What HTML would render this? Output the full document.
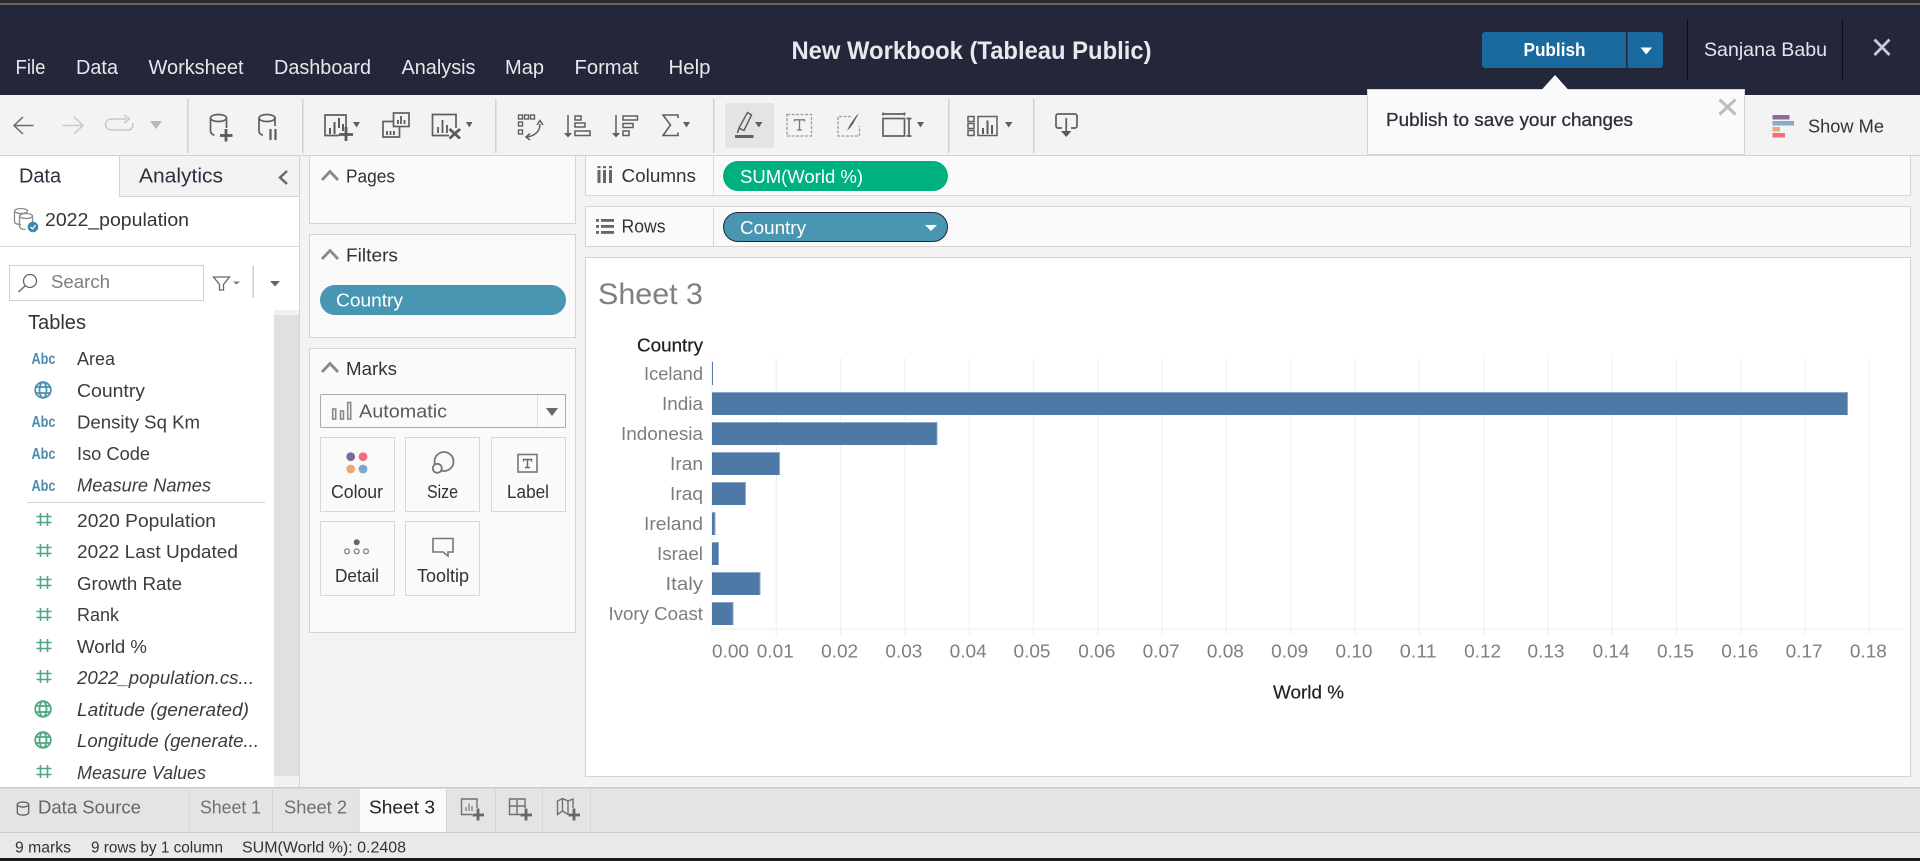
<!DOCTYPE html>
<html lang="en">
<head>
<meta charset="utf-8">
<title>New Workbook (Tableau Public)</title>
<style>
html,body{margin:0;padding:0;width:1920px;height:861px;overflow:hidden;background:#f3f3f3}
svg{display:block}
text{font-family:"Liberation Sans",sans-serif;font-size:18.5px;fill:#3c3c3c}
.m{font-size:20px;fill:#e6e8ec}
.i{stroke:#5f5f5f;stroke-width:1.7;fill:none}
.it{font-style:italic}
.l{fill:#7d7d7d}
.t{fill:#808080}
.s{font-size:15.5px;fill:#333}
.b{fill:#4e79a7}
.h{stroke:#8da7c6;stroke-width:1;fill:none}
.card{fill:#fafafa;stroke:#d4d4d4;stroke-width:1}
.btn{fill:#fafafa;stroke:#d8d8d8;stroke-width:1}
.n{stroke:#4ea883;stroke-width:1.6;fill:none}
.g{stroke:#4c8fb0;stroke-width:1.8;fill:none}
.abc{font-size:15.5px;font-weight:bold;fill:#4f8cab}
</style>
</head>
<body>
<svg xmlns="http://www.w3.org/2000/svg" width="1920" height="861" viewBox="0 0 1920 861">
<!-- base -->
<rect width="1920" height="861" fill="#f3f3f3"/>
<rect width="1920" height="3" fill="#2b2b2b"/>
<rect y="3" width="1920" height="2" fill="#666"/>
<rect y="5" width="1920" height="90" fill="#232739"/>

<!-- menu -->
<text class="m" x="15.5" y="74" textLength="30" lengthAdjust="spacingAndGlyphs">File</text>
<text class="m" x="76" y="74" textLength="42" lengthAdjust="spacingAndGlyphs">Data</text>
<text class="m" x="148.500" y="74" textLength="95" lengthAdjust="spacingAndGlyphs">Worksheet</text>
<text class="m" x="274" y="74" textLength="97" lengthAdjust="spacingAndGlyphs">Dashboard</text>
<text class="m" x="401.500" y="74" textLength="74" lengthAdjust="spacingAndGlyphs">Analysis</text>
<text class="m" x="505" y="74" textLength="39" lengthAdjust="spacingAndGlyphs">Map</text>
<text class="m" x="574.500" y="74" textLength="64" lengthAdjust="spacingAndGlyphs">Format</text>
<text class="m" x="668.500" y="74" textLength="42" lengthAdjust="spacingAndGlyphs">Help</text>
<text x="791.500" y="59" textLength="360" lengthAdjust="spacingAndGlyphs" style="font-size:25px;font-weight:bold;fill:#e8e9ec">New Workbook (Tableau Public)</text>

<!-- publish -->
<rect x="1482" y="32" width="181" height="36" rx="3" fill="#1a6aa0"/>
<rect x="1626" y="32" width="1.5" height="36" fill="#232739"/>
<polygon points="1640.500,47.500 1652,47.500 1646.250,54.500" fill="#fff"/>
<text x="1523.500" y="56" textLength="62" lengthAdjust="spacingAndGlyphs" style="font-size:18.5px;font-weight:bold;fill:#fff">Publish</text>
<rect x="1687" y="20" width="1" height="60" fill="#0b0d14"/>
<rect x="1842" y="20" width="1" height="60" fill="#0b0d14"/>
<text x="1704" y="56" textLength="123" lengthAdjust="spacingAndGlyphs" style="font-size:19.5px;fill:#e4e6ea">Sanjana Babu</text>
<path d="M1874.500 39.500L1889.500 55M1889.500 39.500L1874.500 55" stroke="#c8cbd2" stroke-width="2.800" fill="none"/>

<!-- toolbar -->
<rect y="95" width="1920" height="60" fill="#f3f3f3"/>
<rect y="155" width="1920" height="1" fill="#d4d4d4"/>
<g fill="#d2d2d2">
<rect x="187" y="99" width="1.500" height="54"/><rect x="302" y="99" width="1.500" height="54"/><rect x="495" y="99" width="1.500" height="54"/><rect x="713" y="99" width="1.500" height="54"/><rect x="948" y="99" width="1.500" height="54"/><rect x="1033" y="99" width="1.500" height="54"/>
</g>
<path d="M33.500 125.500H14M23 117L14 125.500L23 134" stroke="#6a6a6a" stroke-width="1.500" fill="none"/>
<path d="M62.500 125.500H83M74 117L83 125.500L74 134" stroke="#c8c8c8" stroke-width="1.500" fill="none"/>
<path d="M127 119H111a5.500 5.500 0 0 0 0 11H128a5 5 0 0 0 5-5V123M124 115L129.500 119L124 123" stroke="#c8c8c8" stroke-width="1.500" fill="none"/>
<polygon points="150,121 162,121 156,129" fill="#b8b8b8"/>

<!-- connect data -->
<g class="i"><ellipse cx="218.500" cy="118" rx="8" ry="3.500"/><path d="M210.500 118V131a4 4 0 0 0 4 4M226.500 118V128"/></g>
<path d="M226 129V141.500M220 135.500H232.500" stroke="#5a5a5a" stroke-width="2.800" fill="none"/>
<g class="i"><ellipse cx="267" cy="118" rx="8" ry="3.500"/><path d="M259 118V131a4 4 0 0 0 4 4M275 118V126"/></g>
<path d="M270.500 129V140M275.500 129V140" stroke="#5a5a5a" stroke-width="2.200" fill="none"/>

<!-- new sheet -->
<path class="i" d="M339 135.500H325V115H346V127"/>
<path d="M330 134V128M334.500 134V122M339 128V118M343 131V124" stroke="#5a5a5a" stroke-width="2" fill="none"/>
<path d="M346 127V141M339 134.500H353" stroke="#5a5a5a" stroke-width="2.800" fill="none"/>
<polygon points="353,122 360,122 356.500,127.500" fill="#5f5f5f"/>
<!-- duplicate -->
<rect class="i" x="393.500" y="113" width="15.500" height="13.500"/>
<path class="i" d="M393 121.500H383V137H399.500V126.500"/>
<path d="M398 124V120M401 124V116M404.500 124V120M387 135V131M390.500 135V131M394 135V131" stroke="#5a5a5a" stroke-width="1.800" fill="none"/>
<!-- clear -->
<path class="i" d="M449 135.500H432.500V114.500H456V128"/>
<path d="M438 133V127M442.500 133V120M447 133V125" stroke="#5a5a5a" stroke-width="1.800" fill="none"/>
<path d="M449.500 129L460 138.500M460 129L449.500 138.500" stroke="#5a5a5a" stroke-width="2.800" fill="none"/>
<polygon points="466,122 472.500,122 469.250,127.500" fill="#5f5f5f"/>
<!-- swap -->
<g class="i" style="stroke-width:1.400"><rect x="518.500" y="115" width="4" height="4"/><rect x="524.500" y="115" width="4" height="4"/><rect x="530.500" y="115" width="4" height="4"/><rect x="518.500" y="122" width="4" height="4"/><rect x="518.500" y="130" width="4" height="4"/></g>
<path d="M540 124C540 131 535 136 527 137M537 125L540 120.500L543 125M530 133.500L526 137L530 140" stroke="#5f5f5f" stroke-width="1.500" fill="none"/>
<!-- sort -->
<path d="M568 115V134" stroke="#5f5f5f" stroke-width="1.500"/><polygon points="564,133 572,133 568,137.500" fill="#5f5f5f"/>
<g class="i" style="stroke-width:1.500"><rect x="575" y="116" width="6" height="4"/><rect x="575" y="123" width="10" height="4"/><rect x="575" y="131" width="15" height="4.500"/></g>
<path d="M616 115V134" stroke="#5f5f5f" stroke-width="1.500"/><polygon points="612,133 620,133 616,137.500" fill="#5f5f5f"/>
<g class="i" style="stroke-width:1.500"><rect x="623" y="116" width="14.500" height="4"/><rect x="623" y="123.500" width="10" height="4"/><rect x="623" y="131" width="6" height="4.500"/></g>
<path d="M678 118V115H663L670.500 125L663 135.500H678V132.500" stroke="#5f5f5f" stroke-width="1.600" fill="none"/>
<polygon points="683,122 690,122 686.500,127.500" fill="#5f5f5f"/>

<!-- highlight -->
<rect x="725" y="103" width="49" height="45" rx="2" fill="#e4e4e4"/>
<path d="M747.500 112.500L751.500 115L744 130.500L739 128Z" fill="none" stroke="#5f5f5f" stroke-width="1.500"/>
<path d="M739 128L737.500 133" stroke="#5f5f5f" stroke-width="1.500"/>
<rect x="735" y="135" width="18.500" height="3" fill="#606060"/>
<polygon points="755,122 762.500,122 758.750,127.500" fill="#5f5f5f"/>
<!-- label -->
<rect x="787" y="114.500" width="24.500" height="21.500" fill="none" stroke="#9c9c9c" stroke-width="1.300" stroke-dasharray="3 1.500"/>
<path d="M794.500 121.500V119.800H804.500V121.500M799.500 120V130M797 130H802" stroke="#777" stroke-width="1.300" fill="none"/>
<!-- format -->
<path d="M851 116.500H838V136H859.500V126" fill="none" stroke="#9c9c9c" stroke-width="1.300" stroke-dasharray="3 1.500"/>
<path d="M859 113L853 124L849.500 128.500L847 130.500L850 124.500L856 116Z" fill="#5f5f5f"/>
<!-- fit -->
<rect class="i" x="883" y="118.500" width="21.500" height="17.500"/>
<path class="i" d="M883 112.500V115.500M904.500 112.500V115.500M883 114H904.500M906.500 118.500H911.500M906.500 136H911.500M909 118.500V136"/>
<polygon points="917,122 924,122 920.500,127.500" fill="#5f5f5f"/>
<!-- show cards -->
<g class="i" style="stroke-width:1.500"><rect x="968" y="116.500" width="6" height="5"/><rect x="968" y="123.500" width="6" height="5"/><rect x="968" y="130.500" width="6" height="5"/><rect x="978" y="116.500" width="19" height="19"/></g>
<path d="M983 134V128M987.500 134V120.500M992 134V125" stroke="#5a5a5a" stroke-width="2" fill="none"/>
<polygon points="1005,122 1012.500,122 1008.750,127.500" fill="#5f5f5f"/>
<!-- share -->
<path class="i" d="M1062 128H1058a2 2 0 0 1-2-2V116a2 2 0 0 1 2-2H1075a2 2 0 0 1 2 2V126a2 2 0 0 1-2 2H1071M1066.250 118V132"/>
<polygon points="1061,131 1071.500,131 1066.250,137" fill="#5a5a5a"/>

<!-- show me -->
<rect x="1772.500" y="115" width="17" height="4.500" fill="#8a6d9f"/>
<rect x="1772.500" y="121" width="21.500" height="4.500" fill="#86a9ce"/>
<rect x="1772.500" y="127" width="7.500" height="4.500" fill="#f0a875"/>
<rect x="1772.500" y="133" width="12.500" height="4.500" fill="#f56b7f"/>
<text x="1808" y="132.500" textLength="76" lengthAdjust="spacingAndGlyphs" style="font-size:18.5px;fill:#333">Show Me</text>

<!-- popover -->
<rect x="1367.500" y="89.500" width="377" height="65" fill="#fafafa" stroke="#d4d4d4"/>
<polygon points="1541,90.500 1555,75 1569,90.500" fill="#fafafa"/>
<text x="1386" y="126" textLength="247" lengthAdjust="spacingAndGlyphs" style="font-size:18.500px;fill:#2b2f3e;stroke:#2b2f3e;stroke-width:.3px">Publish to save your changes</text>
<path d="M1719.500 99.500L1735.500 114.500M1735.500 99.500L1719.500 114.500" stroke="#bcbcbc" stroke-width="3" fill="none"/>

<!-- left data pane -->
<rect x="0" y="156" width="299" height="631" fill="#fff"/>
<rect x="120" y="156" width="179" height="40" fill="#f3f3f3"/>
<rect x="119" y="156" width="1" height="41" fill="#d4d4d4"/>
<rect x="120" y="196" width="179" height="1" fill="#d4d4d4"/>
<rect x="299" y="156" width="1" height="631" fill="#d4d4d4"/>
<text x="19" y="182.500" textLength="42" lengthAdjust="spacingAndGlyphs" style="font-size:20px;fill:#2b2f3e">Data</text>
<text x="139" y="182.500" textLength="84" lengthAdjust="spacingAndGlyphs" style="font-size:20px;fill:#2b2f3e">Analytics</text>
<path d="M287 171L280 177.500L287 184" stroke="#666" stroke-width="2.400" fill="none"/>
<!-- data source icon -->
<g fill="none" stroke="#8a8a8a" stroke-width="1.300"><ellipse cx="21" cy="211" rx="6.500" ry="2.500"/><path d="M14.500 211V222a6 3 0 0 0 6.500 2.500"/><ellipse cx="26" cy="216" rx="6.500" ry="2.500"/><path d="M19.500 216V227a6 3 0 0 0 6 2.500M32.500 216V222"/></g>
<circle cx="33" cy="227" r="5.300" fill="#3d87b2"/>
<path d="M30.500 227L32.500 229L35.500 225" stroke="#fff" stroke-width="1.200" fill="none"/>
<text x="45" y="226" textLength="144" lengthAdjust="spacingAndGlyphs" style="font-size:18.500px;fill:#333">2022_population</text>
<rect x="0" y="246" width="299" height="1" fill="#d8d8d8"/>
<!-- search -->
<rect x="9.500" y="265.500" width="194" height="35" fill="#fff" stroke="#cfcfcf"/>
<circle cx="30" cy="281" r="6.500" fill="none" stroke="#666" stroke-width="1.300"/>
<path d="M25 286L18.500 292" stroke="#666" stroke-width="1.500"/>
<text x="51" y="288" textLength="59" lengthAdjust="spacingAndGlyphs" style="font-size:18.500px;fill:#7d7d7d">Search</text>
<path d="M213.500 277H229.500L223.500 284.500V290H219.500V284.500Z" fill="none" stroke="#666" stroke-width="1.300"/>
<polygon points="233,281.500 240,281.500 236.500,284.500" fill="#777"/>
<rect x="252.500" y="266" width="1.500" height="32" fill="#cfcfcf"/>
<polygon points="270,281 280,281 275,286.500" fill="#666"/>
<!-- scrollbar -->
<rect x="274" y="310" width="25" height="5" fill="#f1f1f1"/>
<rect x="274" y="315" width="25" height="461" fill="#e0e0e0"/>
<rect x="274" y="776" width="25" height="11" fill="#f1f1f1"/>

<text x="28" y="329" textLength="58" lengthAdjust="spacingAndGlyphs" style="font-size:20px;fill:#333">Tables</text>

<!-- dims -->
<text class="abc" x="31.500" y="364" textLength="24" lengthAdjust="spacingAndGlyphs">Abc</text>
<text x="77" y="365" textLength="38" lengthAdjust="spacingAndGlyphs">Area</text>
<g class="g"><circle cx="43" cy="390" r="7.800"/><ellipse cx="43" cy="390" rx="3.500" ry="7.800"/><path d="M35 387H51M35 393H51"/></g>
<text x="77" y="397" textLength="68" lengthAdjust="spacingAndGlyphs">Country</text>
<text class="abc" x="31.500" y="427" textLength="24" lengthAdjust="spacingAndGlyphs">Abc</text>
<text x="77" y="428.500" textLength="123" lengthAdjust="spacingAndGlyphs">Density Sq Km</text>
<text class="abc" x="31.500" y="459" textLength="24" lengthAdjust="spacingAndGlyphs">Abc</text>
<text x="77" y="460" textLength="73" lengthAdjust="spacingAndGlyphs">Iso Code</text>
<text class="abc" x="31.500" y="491" textLength="24" lengthAdjust="spacingAndGlyphs">Abc</text>
<text class="it" x="77" y="491.500" textLength="134" lengthAdjust="spacingAndGlyphs">Measure Names</text>
<rect x="27" y="502" width="238" height="1" fill="#d4d4d4"/>

<!-- measures -->
<path class="n" d="M40.500 513V526M47.500 513V526M36.500 516.500H51.500M36.500 522.500H51.500"/>
<text x="77" y="527" textLength="139" lengthAdjust="spacingAndGlyphs">2020 Population</text>
<path class="n" d="M40.500 544V557M47.500 544V557M36.500 547.500H51.500M36.500 553.500H51.500"/>
<text x="77" y="558" textLength="161" lengthAdjust="spacingAndGlyphs">2022 Last Updated</text>
<path class="n" d="M40.500 576V589M47.500 576V589M36.500 579.500H51.500M36.500 585.500H51.500"/>
<text x="77" y="590" textLength="105" lengthAdjust="spacingAndGlyphs">Growth Rate</text>
<path class="n" d="M40.500 608V621M47.500 608V621M36.500 611.500H51.500M36.500 617.500H51.500"/>
<text x="77" y="621" textLength="42" lengthAdjust="spacingAndGlyphs">Rank</text>
<path class="n" d="M40.500 639V652M47.500 639V652M36.500 642.500H51.500M36.500 648.500H51.500"/>
<text x="77" y="653" textLength="70" lengthAdjust="spacingAndGlyphs">World %</text>
<path class="n" d="M40.500 670V683M47.500 670V683M36.500 673.500H51.500M36.500 679.500H51.500"/>
<text class="it" x="77" y="684" textLength="177" lengthAdjust="spacingAndGlyphs">2022_population.cs...</text>
<g class="n" style="stroke-width:1.800"><circle cx="43" cy="709" r="7.800"/><ellipse cx="43" cy="709" rx="3.500" ry="7.800"/><path d="M35 706H51M35 712H51"/></g>
<text class="it" x="77" y="716" textLength="172" lengthAdjust="spacingAndGlyphs">Latitude (generated)</text>
<g class="n" style="stroke-width:1.800"><circle cx="43" cy="740" r="7.800"/><ellipse cx="43" cy="740" rx="3.500" ry="7.800"/><path d="M35 737H51M35 743H51"/></g>
<text class="it" x="77" y="747" textLength="182" lengthAdjust="spacingAndGlyphs">Longitude (generate...</text>
<path class="n" d="M40.500 765V778M47.500 765V778M36.500 768.500H51.500M36.500 774.500H51.500"/>
<text class="it" x="77" y="779" textLength="129" lengthAdjust="spacingAndGlyphs">Measure Values</text>

<!-- middle cards -->
<rect class="card" x="309.500" y="155.500" width="266" height="68"/>
<rect class="card" x="309.500" y="234.500" width="266" height="103"/>
<rect class="card" x="309.500" y="348.500" width="266" height="284"/>
<path d="M322 180L330 171.500L338 180" stroke="#8a8a8a" stroke-width="2.800" fill="none"/>
<path d="M322 259L330 250.500L338 259" stroke="#8a8a8a" stroke-width="2.800" fill="none"/>
<path d="M322 372L330 363.500L338 372" stroke="#8a8a8a" stroke-width="2.800" fill="none"/>
<text x="346" y="182.500" textLength="49" lengthAdjust="spacingAndGlyphs" style="fill:#333">Pages</text>
<text x="346" y="261.500" textLength="52" lengthAdjust="spacingAndGlyphs" style="fill:#333">Filters</text>
<text x="346" y="375" textLength="51" lengthAdjust="spacingAndGlyphs" style="fill:#333">Marks</text>
<rect x="320" y="285" width="246" height="30" rx="15" fill="#4996b2"/>
<text x="336" y="306.500" textLength="67" lengthAdjust="spacingAndGlyphs" style="fill:#fff">Country</text>

<rect x="320.500" y="394.500" width="245" height="33" rx="1" fill="#fafafa" stroke="#aaa"/>
<rect x="537" y="395" width="1" height="32" fill="#dcdcdc"/>
<polygon points="546,408 558,408 552,416" fill="#666"/>
<g fill="none" stroke="#888" stroke-width="1.600"><rect x="332.700" y="409" width="3" height="10"/><rect x="340.500" y="411" width="3" height="8"/><rect x="347.700" y="402.500" width="3" height="16.500"/></g>
<text x="359" y="417.500" textLength="88" lengthAdjust="spacingAndGlyphs" style="fill:#5a5a5a">Automatic</text>

<rect class="btn" x="320.500" y="437.500" width="74" height="74"/>
<rect class="btn" x="405.500" y="437.500" width="74" height="74"/>
<rect class="btn" x="491.500" y="437.500" width="74" height="74"/>
<rect class="btn" x="320.500" y="521.500" width="74" height="74"/>
<rect class="btn" x="405.500" y="521.500" width="74" height="74"/>
<circle cx="350.700" cy="456.700" r="4.400" fill="#7b6a9b"/><circle cx="363" cy="456.700" r="4.400" fill="#f26d7d"/>
<circle cx="350.700" cy="469" r="4.400" fill="#efa873"/><circle cx="363" cy="469" r="4.400" fill="#7da6cf"/>
<circle cx="444" cy="461.500" r="9.500" fill="none" stroke="#777" stroke-width="1.800"/>
<circle cx="437.300" cy="468.300" r="4.500" fill="#fafafa" stroke="#777" stroke-width="1.800"/>
<rect x="518" y="454.500" width="19" height="17.500" fill="none" stroke="#777" stroke-width="1.600"/>
<path d="M523.500 461.500V459.500H531.500V461.500M527.500 460V467.500M525 467.500H530" stroke="#666" stroke-width="1.400" fill="none"/>
<circle cx="356.700" cy="542.300" r="3" fill="#666"/>
<g fill="none" stroke="#888" stroke-width="1.400"><circle cx="347" cy="551.300" r="2.400"/><circle cx="356.700" cy="551.300" r="2.400"/><circle cx="366" cy="551.300" r="2.400"/></g>
<path d="M433 538.500H453V552H448V556L443 552H433Z" fill="none" stroke="#777" stroke-width="1.600"/>
<text x="331" y="498" textLength="52" lengthAdjust="spacingAndGlyphs" style="fill:#333">Colour</text>
<text x="427" y="498" textLength="31" lengthAdjust="spacingAndGlyphs" style="fill:#333">Size</text>
<text x="507" y="498" textLength="42" lengthAdjust="spacingAndGlyphs" style="fill:#333">Label</text>
<text x="335" y="582" textLength="44" lengthAdjust="spacingAndGlyphs" style="fill:#333">Detail</text>
<text x="417" y="582" textLength="52" lengthAdjust="spacingAndGlyphs" style="fill:#333">Tooltip</text>

<!-- shelves -->
<rect class="card" x="585.500" y="155.500" width="1325" height="40"/>
<rect class="card" x="585.500" y="206.500" width="1325" height="40"/>
<rect x="713" y="157" width="1" height="38" fill="#d8d8d8"/>
<rect x="713" y="208" width="1" height="38" fill="#d8d8d8"/>
<g fill="#666"><rect x="597.500" y="170" width="3" height="13"/><rect x="603" y="170" width="3" height="13"/><rect x="609" y="170" width="3" height="13"/><rect x="597.500" y="166" width="3" height="2.200"/><rect x="603" y="166" width="3" height="2.200"/><rect x="609" y="166" width="3" height="2.200"/></g>
<g fill="#666"><rect x="596" y="219" width="3" height="2.800"/><rect x="596" y="225" width="3" height="2.800"/><rect x="596" y="231" width="3" height="2.800"/><rect x="601" y="219" width="13" height="2.800"/><rect x="601" y="225" width="13" height="2.800"/><rect x="601" y="231" width="13" height="2.800"/></g>
<text x="621.500" y="182" textLength="74.500" lengthAdjust="spacingAndGlyphs" style="fill:#333">Columns</text>
<text x="621.500" y="232.500" textLength="44" lengthAdjust="spacingAndGlyphs" style="fill:#333">Rows</text>
<rect x="723" y="161" width="225" height="30" rx="15" fill="#00b180"/>
<text x="740" y="183" textLength="123" lengthAdjust="spacingAndGlyphs" style="fill:#fff">SUM(World %)</text>
<rect x="723.500" y="212.500" width="224" height="29" rx="14.500" fill="#4996b2" stroke="#22283a"/>
<text x="740" y="234" textLength="66" lengthAdjust="spacingAndGlyphs" style="fill:#fff">Country</text>
<polygon points="925,225 937,225 931,231" fill="#fff"/>

<!-- viz card -->
<rect x="585.500" y="257.500" width="1325" height="519" fill="#fff" stroke="#d4d4d4"/>
<text x="598" y="304" textLength="105" lengthAdjust="spacingAndGlyphs" style="font-size:30px;fill:#808080">Sheet 3</text>
<text x="637" y="351.500" textLength="66" lengthAdjust="spacingAndGlyphs" style="fill:#222;stroke:#222;stroke-width:.25px">Country</text>

<!-- grid -->
<path d="M712 358V635M776.300 358V635M840.600 358V635M904.900 358V635M969.200 358V635M1033.500 358V635M1097.800 358V635M1162.100 358V635M1226.400 358V635M1290.700 358V635M1355 358V635M1419.300 358V635M1483.600 358V635M1547.900 358V635M1612.200 358V635M1676.500 358V635M1740.800 358V635M1805.100 358V635M1869.400 358V635M712 629H1904" stroke="#f1f1f2" stroke-width="1.200" fill="none"/>

<!-- bars -->
<rect class="b" x="712" y="362" width="1" height="23"/>
<rect class="b" x="712" y="392.500" width="1136" height="22.500"/>
<rect class="b" x="712" y="422.500" width="225.500" height="22.500"/>
<rect class="b" x="712" y="452.500" width="68" height="22.500"/>
<rect class="b" x="712" y="482.500" width="34" height="22.500"/>
<rect class="b" x="712" y="512.500" width="3.500" height="22.500"/>
<rect class="b" x="712" y="542.500" width="7" height="22.500"/>
<rect class="b" x="712" y="572.500" width="48.500" height="22.500"/>
<rect class="b" x="712" y="602.500" width="21.500" height="22.500"/>
<path class="h" d="M712 392.500H1847.500V415M712 422.500H937V445M712 452.500H779.500V475M712 482.500H745.500V505M712 512.500H715V535M712 542.500H718.500V565M712 572.500H760V595M712 602.500H733V625"/>

<!-- row labels -->
<text class="l" x="644" y="380" textLength="59" lengthAdjust="spacingAndGlyphs">Iceland</text>
<text class="l" x="662" y="410" textLength="41" lengthAdjust="spacingAndGlyphs">India</text>
<text class="l" x="621" y="440" textLength="82" lengthAdjust="spacingAndGlyphs">Indonesia</text>
<text class="l" x="670" y="470" textLength="33" lengthAdjust="spacingAndGlyphs">Iran</text>
<text class="l" x="670" y="500" textLength="33" lengthAdjust="spacingAndGlyphs">Iraq</text>
<text class="l" x="644" y="530" textLength="59" lengthAdjust="spacingAndGlyphs">Ireland</text>
<text class="l" x="657" y="560" textLength="46" lengthAdjust="spacingAndGlyphs">Israel</text>
<text class="l" x="665.500" y="590" textLength="37.500" lengthAdjust="spacingAndGlyphs">Italy</text>
<text class="l" x="608.500" y="620" textLength="94.500" lengthAdjust="spacingAndGlyphs">Ivory Coast</text>

<!-- axis labels -->
<text class="t" x="712" y="657.500" textLength="37" lengthAdjust="spacingAndGlyphs">0.00</text>
<text class="t" x="756.800" y="657.500" textLength="37" lengthAdjust="spacingAndGlyphs">0.01</text>
<text class="t" x="821.100" y="657.500" textLength="37" lengthAdjust="spacingAndGlyphs">0.02</text>
<text class="t" x="885.400" y="657.500" textLength="37" lengthAdjust="spacingAndGlyphs">0.03</text>
<text class="t" x="949.700" y="657.500" textLength="37" lengthAdjust="spacingAndGlyphs">0.04</text>
<text class="t" x="1013.500" y="657.500" textLength="37" lengthAdjust="spacingAndGlyphs">0.05</text>
<text class="t" x="1078.300" y="657.500" textLength="37" lengthAdjust="spacingAndGlyphs">0.06</text>
<text class="t" x="1142.600" y="657.500" textLength="37" lengthAdjust="spacingAndGlyphs">0.07</text>
<text class="t" x="1206.900" y="657.500" textLength="37" lengthAdjust="spacingAndGlyphs">0.08</text>
<text class="t" x="1271.200" y="657.500" textLength="37" lengthAdjust="spacingAndGlyphs">0.09</text>
<text class="t" x="1335.500" y="657.500" textLength="37" lengthAdjust="spacingAndGlyphs">0.10</text>
<text class="t" x="1399.800" y="657.500" textLength="37" lengthAdjust="spacingAndGlyphs">0.11</text>
<text class="t" x="1464.100" y="657.500" textLength="37" lengthAdjust="spacingAndGlyphs">0.12</text>
<text class="t" x="1527.500" y="657.500" textLength="37" lengthAdjust="spacingAndGlyphs">0.13</text>
<text class="t" x="1592.700" y="657.500" textLength="37" lengthAdjust="spacingAndGlyphs">0.14</text>
<text class="t" x="1657" y="657.500" textLength="37" lengthAdjust="spacingAndGlyphs">0.15</text>
<text class="t" x="1721.300" y="657.500" textLength="37" lengthAdjust="spacingAndGlyphs">0.16</text>
<text class="t" x="1785.600" y="657.500" textLength="37" lengthAdjust="spacingAndGlyphs">0.17</text>
<text class="t" x="1849.900" y="657.500" textLength="37" lengthAdjust="spacingAndGlyphs">0.18</text>
<text x="1273" y="698.500" textLength="71" lengthAdjust="spacingAndGlyphs" style="fill:#222;stroke:#222;stroke-width:.2px">World %</text>

<!-- tab bar -->
<rect x="0" y="787" width="1920" height="46" fill="#e4e4e4"/>
<rect x="0" y="787" width="1920" height="1.500" fill="#cbcbcb"/>
<rect x="359" y="789" width="87" height="43" fill="#fafafa"/>
<g fill="#d6d6d6"><rect x="188.500" y="789" width="1" height="43"/><rect x="272" y="789" width="1" height="43"/><rect x="358.500" y="789" width="1" height="43"/><rect x="446" y="789" width="1" height="43"/><rect x="495" y="789" width="1" height="43"/><rect x="542" y="789" width="1" height="43"/><rect x="590" y="789" width="1" height="43"/></g>
<g fill="none" stroke="#666" stroke-width="1.400"><ellipse cx="23" cy="804.500" rx="5.700" ry="2.500"/><path d="M17.300 804.500V812.500C17.300 816 28.700 816 28.700 812.500V804.500"/></g>
<text x="38" y="813.500" textLength="103" lengthAdjust="spacingAndGlyphs" style="fill:#666">Data Source</text>
<text x="200" y="813.500" textLength="61" lengthAdjust="spacingAndGlyphs" style="fill:#707070">Sheet 1</text>
<text x="284" y="813.500" textLength="63" lengthAdjust="spacingAndGlyphs" style="fill:#707070">Sheet 2</text>
<text x="369" y="813.500" textLength="66" lengthAdjust="spacingAndGlyphs" style="fill:#222">Sheet 3</text>
<!-- new tab icons -->
<path class="i" d="M472 814.500H461.500V799H477V808" style="stroke:#707070;stroke-width:1.400"/>
<path d="M466 811V807M469 811V803.500M472 811V806" stroke="#777" stroke-width="1.200" fill="none"/>
<path d="M478 808.500V820.500M472.500 815H484" stroke="#666" stroke-width="2.800" fill="none"/>
<path class="i" d="M520.500 814.500H509.500V799H525V808M509.500 806H525M517 799V814.500" style="stroke:#707070;stroke-width:1.400"/>
<path d="M526 808.500V820.500M520.500 815H532" stroke="#666" stroke-width="2.800" fill="none"/>
<path class="i" d="M568 814.500L562.500 811L557.500 814.500V801L562.500 798.500L568 801V814.500M568 801L573 799V808M562.500 798.500V811" style="stroke:#707070;stroke-width:1.400"/>
<path d="M574 808.500V820.500M568.500 815H580" stroke="#666" stroke-width="2.800" fill="none"/>

<!-- status bar -->
<rect x="0" y="832" width="1920" height="1" fill="#cbcbcb"/>
<rect x="0" y="833" width="1920" height="25" fill="#e9e9e9"/>
<rect x="0" y="858" width="1920" height="3" fill="#1c1c1c"/>
<text class="s" x="15" y="852.500" textLength="56" lengthAdjust="spacingAndGlyphs">9 marks</text>
<text class="s" x="91" y="852.500" textLength="132" lengthAdjust="spacingAndGlyphs">9 rows by 1 column</text>
<text class="s" x="242" y="852.500" textLength="164" lengthAdjust="spacingAndGlyphs">SUM(World %): 0.2408</text>
</svg>
</body>
</html>
